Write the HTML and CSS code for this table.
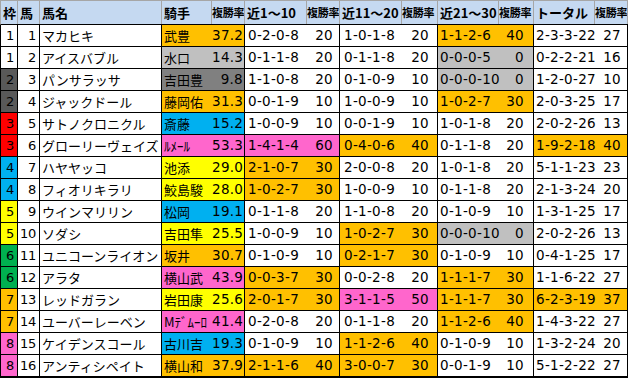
FILE: index.html
```html
<!DOCTYPE html>
<html lang="ja">
<head>
<meta charset="utf-8">
<title>出馬表</title>
<link rel="stylesheet" href="styles.css">
</head>
<body>
<div class="sheet">
  <div class="head">
    <div class="hc">枠</div>
    <div class="hc">馬</div>
    <div class="hc">馬名</div>
    <div class="hc">騎手</div>
    <div class="hc sm">複勝率</div>
    <div class="hc">近1～10</div>
    <div class="hc sm">複勝率</div>
    <div class="hc">近11～20</div>
    <div class="hc sm">複勝率</div>
    <div class="hc">近21～30</div>
    <div class="hc sm">複勝率</div>
    <div class="hc">トータル</div>
    <div class="hc sm">複勝率</div>
  </div>

  <div class="row">
    <div class="c num w">1</div><div class="c num">1</div><div class="c name">マカヒキ</div>
    <div class="c pair jk o"><span class="l jp">武豊</span><span class="r">37.2</span></div>
    <div class="c pair p1"><span class="l">0-2-0-8</span><span class="r">20</span></div>
    <div class="c pair p2"><span class="l">1-0-1-8</span><span class="r">20</span></div>
    <div class="c pair p3 o"><span class="l">1-1-2-6</span><span class="r">40</span></div>
    <div class="c pair p4"><span class="l">2-3-3-22</span><span class="r">27</span></div>
  </div>
  <div class="row">
    <div class="c num w">1</div><div class="c num">2</div><div class="c name">アイスバブル</div>
    <div class="c pair jk g"><span class="l jp">水口</span><span class="r">14.3</span></div>
    <div class="c pair p1"><span class="l">0-1-1-8</span><span class="r">20</span></div>
    <div class="c pair p2"><span class="l">0-1-1-8</span><span class="r">20</span></div>
    <div class="c pair p3 g"><span class="l">0-0-0-5</span><span class="r">0</span></div>
    <div class="c pair p4"><span class="l">0-2-2-21</span><span class="r">16</span></div>
  </div>
  <div class="row">
    <div class="c num f2">2</div><div class="c num">3</div><div class="c name">パンサラッサ</div>
    <div class="c pair jk dg"><span class="l jp">吉田豊</span><span class="r">9.8</span></div>
    <div class="c pair p1"><span class="l">1-1-0-8</span><span class="r">20</span></div>
    <div class="c pair p2"><span class="l">0-1-0-9</span><span class="r">10</span></div>
    <div class="c pair p3 g"><span class="l">0-0-0-10</span><span class="r">0</span></div>
    <div class="c pair p4"><span class="l">1-2-0-27</span><span class="r">10</span></div>
  </div>
  <div class="row">
    <div class="c num f2">2</div><div class="c num">4</div><div class="c name">ジャックドール</div>
    <div class="c pair jk o"><span class="l jp">藤岡佑</span><span class="r">31.3</span></div>
    <div class="c pair p1"><span class="l">0-0-1-9</span><span class="r">10</span></div>
    <div class="c pair p2"><span class="l">1-0-0-9</span><span class="r">10</span></div>
    <div class="c pair p3 o"><span class="l">1-0-2-7</span><span class="r">30</span></div>
    <div class="c pair p4"><span class="l">2-0-3-25</span><span class="r">17</span></div>
  </div>
  <div class="row">
    <div class="c num rd">3</div><div class="c num">5</div><div class="c name">サトノクロニクル</div>
    <div class="c pair jk b"><span class="l jp">斎藤</span><span class="r">15.2</span></div>
    <div class="c pair p1"><span class="l">1-0-0-9</span><span class="r">10</span></div>
    <div class="c pair p2"><span class="l">0-0-1-9</span><span class="r">10</span></div>
    <div class="c pair p3"><span class="l">1-0-1-8</span><span class="r">20</span></div>
    <div class="c pair p4"><span class="l">2-0-2-26</span><span class="r">13</span></div>
  </div>
  <div class="row">
    <div class="c num rd">3</div><div class="c num">6</div><div class="c name">グローリーヴェイズ</div>
    <div class="c pair jk p"><span class="l jp">ﾙﾒｰﾙ</span><span class="r">53.3</span></div>
    <div class="c pair p1 p"><span class="l">1-4-1-4</span><span class="r">60</span></div>
    <div class="c pair p2 o"><span class="l">0-4-0-6</span><span class="r">40</span></div>
    <div class="c pair p3"><span class="l">0-1-1-8</span><span class="r">20</span></div>
    <div class="c pair p4 o"><span class="l">1-9-2-18</span><span class="r">40</span></div>
  </div>
  <div class="row">
    <div class="c num b">4</div><div class="c num">7</div><div class="c name">ハヤヤッコ</div>
    <div class="c pair jk y"><span class="l jp">池添</span><span class="r">29.0</span></div>
    <div class="c pair p1 o"><span class="l">2-1-0-7</span><span class="r">30</span></div>
    <div class="c pair p2"><span class="l">2-0-0-8</span><span class="r">20</span></div>
    <div class="c pair p3"><span class="l">1-0-1-8</span><span class="r">20</span></div>
    <div class="c pair p4"><span class="l">5-1-1-23</span><span class="r">23</span></div>
  </div>
  <div class="row">
    <div class="c num b">4</div><div class="c num">8</div><div class="c name">フィオリキラリ</div>
    <div class="c pair jk y"><span class="l jp">鮫島駿</span><span class="r">28.0</span></div>
    <div class="c pair p1 o"><span class="l">1-0-2-7</span><span class="r">30</span></div>
    <div class="c pair p2"><span class="l">1-0-0-9</span><span class="r">10</span></div>
    <div class="c pair p3"><span class="l">0-1-1-8</span><span class="r">20</span></div>
    <div class="c pair p4"><span class="l">2-1-3-24</span><span class="r">20</span></div>
  </div>
  <div class="row">
    <div class="c num y">5</div><div class="c num">9</div><div class="c name">ウインマリリン</div>
    <div class="c pair jk b"><span class="l jp">松岡</span><span class="r">19.1</span></div>
    <div class="c pair p1"><span class="l">0-1-1-8</span><span class="r">20</span></div>
    <div class="c pair p2"><span class="l">1-1-0-8</span><span class="r">20</span></div>
    <div class="c pair p3"><span class="l">0-1-0-9</span><span class="r">10</span></div>
    <div class="c pair p4"><span class="l">1-3-1-25</span><span class="r">17</span></div>
  </div>
  <div class="row">
    <div class="c num y">5</div><div class="c num">10</div><div class="c name">ソダシ</div>
    <div class="c pair jk y"><span class="l jp">吉田隼</span><span class="r">25.5</span></div>
    <div class="c pair p1"><span class="l">1-0-0-9</span><span class="r">10</span></div>
    <div class="c pair p2 o"><span class="l">1-0-2-7</span><span class="r">30</span></div>
    <div class="c pair p3 g"><span class="l">0-0-0-10</span><span class="r">0</span></div>
    <div class="c pair p4"><span class="l">2-0-2-26</span><span class="r">13</span></div>
  </div>
  <div class="row">
    <div class="c num gr">6</div><div class="c num">11</div><div class="c name">ユニコーンライオン</div>
    <div class="c pair jk o"><span class="l jp">坂井</span><span class="r">30.7</span></div>
    <div class="c pair p1"><span class="l">0-1-0-9</span><span class="r">10</span></div>
    <div class="c pair p2 o"><span class="l">0-2-1-7</span><span class="r">30</span></div>
    <div class="c pair p3"><span class="l">0-1-0-9</span><span class="r">10</span></div>
    <div class="c pair p4"><span class="l">0-4-1-25</span><span class="r">17</span></div>
  </div>
  <div class="row">
    <div class="c num gr">6</div><div class="c num">12</div><div class="c name">アラタ</div>
    <div class="c pair jk p"><span class="l jp">横山武</span><span class="r">43.9</span></div>
    <div class="c pair p1 o"><span class="l">0-0-3-7</span><span class="r">30</span></div>
    <div class="c pair p2"><span class="l">0-0-2-8</span><span class="r">20</span></div>
    <div class="c pair p3 o"><span class="l">1-1-1-7</span><span class="r">30</span></div>
    <div class="c pair p4"><span class="l">1-1-6-22</span><span class="r">27</span></div>
  </div>
  <div class="row">
    <div class="c num o">7</div><div class="c num">13</div><div class="c name">レッドガラン</div>
    <div class="c pair jk y"><span class="l jp">岩田康</span><span class="r">25.6</span></div>
    <div class="c pair p1 o"><span class="l">2-0-1-7</span><span class="r">30</span></div>
    <div class="c pair p2 p"><span class="l">3-1-1-5</span><span class="r">50</span></div>
    <div class="c pair p3 o"><span class="l">1-1-1-7</span><span class="r">30</span></div>
    <div class="c pair p4 o"><span class="l">6-2-3-19</span><span class="r">37</span></div>
  </div>
  <div class="row">
    <div class="c num o">7</div><div class="c num">14</div><div class="c name">ユーバーレーベン</div>
    <div class="c pair jk p"><span class="l jp">Mﾃﾞﾑｰﾛ</span><span class="r">41.4</span></div>
    <div class="c pair p1"><span class="l">0-2-0-8</span><span class="r">20</span></div>
    <div class="c pair p2"><span class="l">0-1-1-8</span><span class="r">20</span></div>
    <div class="c pair p3 o"><span class="l">1-1-2-6</span><span class="r">40</span></div>
    <div class="c pair p4"><span class="l">1-4-3-22</span><span class="r">27</span></div>
  </div>
  <div class="row">
    <div class="c num p">8</div><div class="c num">15</div><div class="c name">ケイデンスコール</div>
    <div class="c pair jk b"><span class="l jp">古川吉</span><span class="r">19.3</span></div>
    <div class="c pair p1"><span class="l">0-1-0-9</span><span class="r">10</span></div>
    <div class="c pair p2 o"><span class="l">1-1-2-6</span><span class="r">40</span></div>
    <div class="c pair p3"><span class="l">0-1-0-9</span><span class="r">10</span></div>
    <div class="c pair p4"><span class="l">1-3-2-24</span><span class="r">20</span></div>
  </div>
  <div class="row last">
    <div class="c num p">8</div><div class="c num">16</div><div class="c name">アンティシペイト</div>
    <div class="c pair jk o"><span class="l jp">横山和</span><span class="r">37.9</span></div>
    <div class="c pair p1 o"><span class="l">2-1-1-6</span><span class="r">40</span></div>
    <div class="c pair p2 o"><span class="l">3-0-0-7</span><span class="r">30</span></div>
    <div class="c pair p3"><span class="l">0-0-1-9</span><span class="r">10</span></div>
    <div class="c pair p4"><span class="l">5-1-2-22</span><span class="r">27</span></div>
  </div>
</div>
</body>
</html>
```

FILE: styles.css
```css
html, body {
  margin: 0;
  padding: 0;
  background: #ffffff;
}
.sheet {
  width: 628px;
  color: #000000;
}
.head {
  display: grid;
  grid-template-columns: 17px 22px 122px 50px 33px 62px 33px 62px 36px 61px 35px 61px 33px;
  height: 25px;
  box-sizing: border-box;
  border-top: 1px solid #a6a6a6;
  border-left: 1px solid #a6a6a6;
  border-bottom: 1px solid #000000;
  background: #c5d9f1;
}
.hc {
  box-sizing: border-box;
  border-right: 1px solid #a6a6a6;
  font-family: "Noto Sans CJK JP", sans-serif;
  font-weight: 700;
  font-size: 13px;
  line-height: 23px;
  padding-left: 2px;
  white-space: nowrap;
  overflow: hidden;
}
.hc.sm {
  font-size: 11px;
  padding-left: 0;
  letter-spacing: -0.3px;
}
.row {
  display: grid;
  grid-template-columns: 17px 22px 122px 83px 95px 98px 96px 94px;
  height: 22px;
  box-sizing: border-box;
  border-left: 1px solid #000000;
  border-bottom: 1px solid #000000;
}
.row.last {
  height: 23px;
  border-bottom: 2px solid #000000;
}
.c {
  box-sizing: border-box;
  border-right: 1px solid #000000;
  line-height: 21px;
  white-space: nowrap;
  overflow: hidden;
  font-family: "DejaVu Sans", sans-serif;
  font-size: 13.5px;
  letter-spacing: 0.3px;
}
.num {
  text-align: right;
  padding-right: 3px;
  font-size: 13px;
  letter-spacing: -0.3px;
}
.name {
  font-family: "Noto Sans CJK JP", sans-serif;
  font-size: 13px;
  letter-spacing: 0;
  padding-left: 2px;
}
.pair {
  display: flex;
}
.pair .l {
  flex: none;
  box-sizing: border-box;
}
.pair .r {
  flex: 1;
  text-align: right;
}
.jp {
  font-family: "Noto Sans CJK JP", sans-serif;
  font-size: 13px;
  letter-spacing: 0;
}
.jk .l { width: 50px; padding-left: 2px; }
.jk .r { padding-right: 1px; }
.p1 .l { width: 62px; padding-left: 3px; }
.p1 .r { padding-right: 6px; }
.p2 .l { width: 62px; padding-left: 4px; }
.p2 .r { padding-right: 8px; }
.p3 .l { width: 61px; padding-left: 2px; }
.p3 .r { padding-right: 9px; }
.p4 .l { width: 61px; padding-left: 2px; }
.p4 .r { padding-right: 6px; }

.w { background: #ffffff; }
.o { background: #ffc000; }
.g { background: #c0c0c0; }
.dg { background: #808080; }
.f2 { background: #595959; }
.rd { background: #ff0000; }
.b { background: #00b0f0; }
.y { background: #ffff00; }
.gr { background: #00b050; }
.p { background: #ff66cc; }
```
